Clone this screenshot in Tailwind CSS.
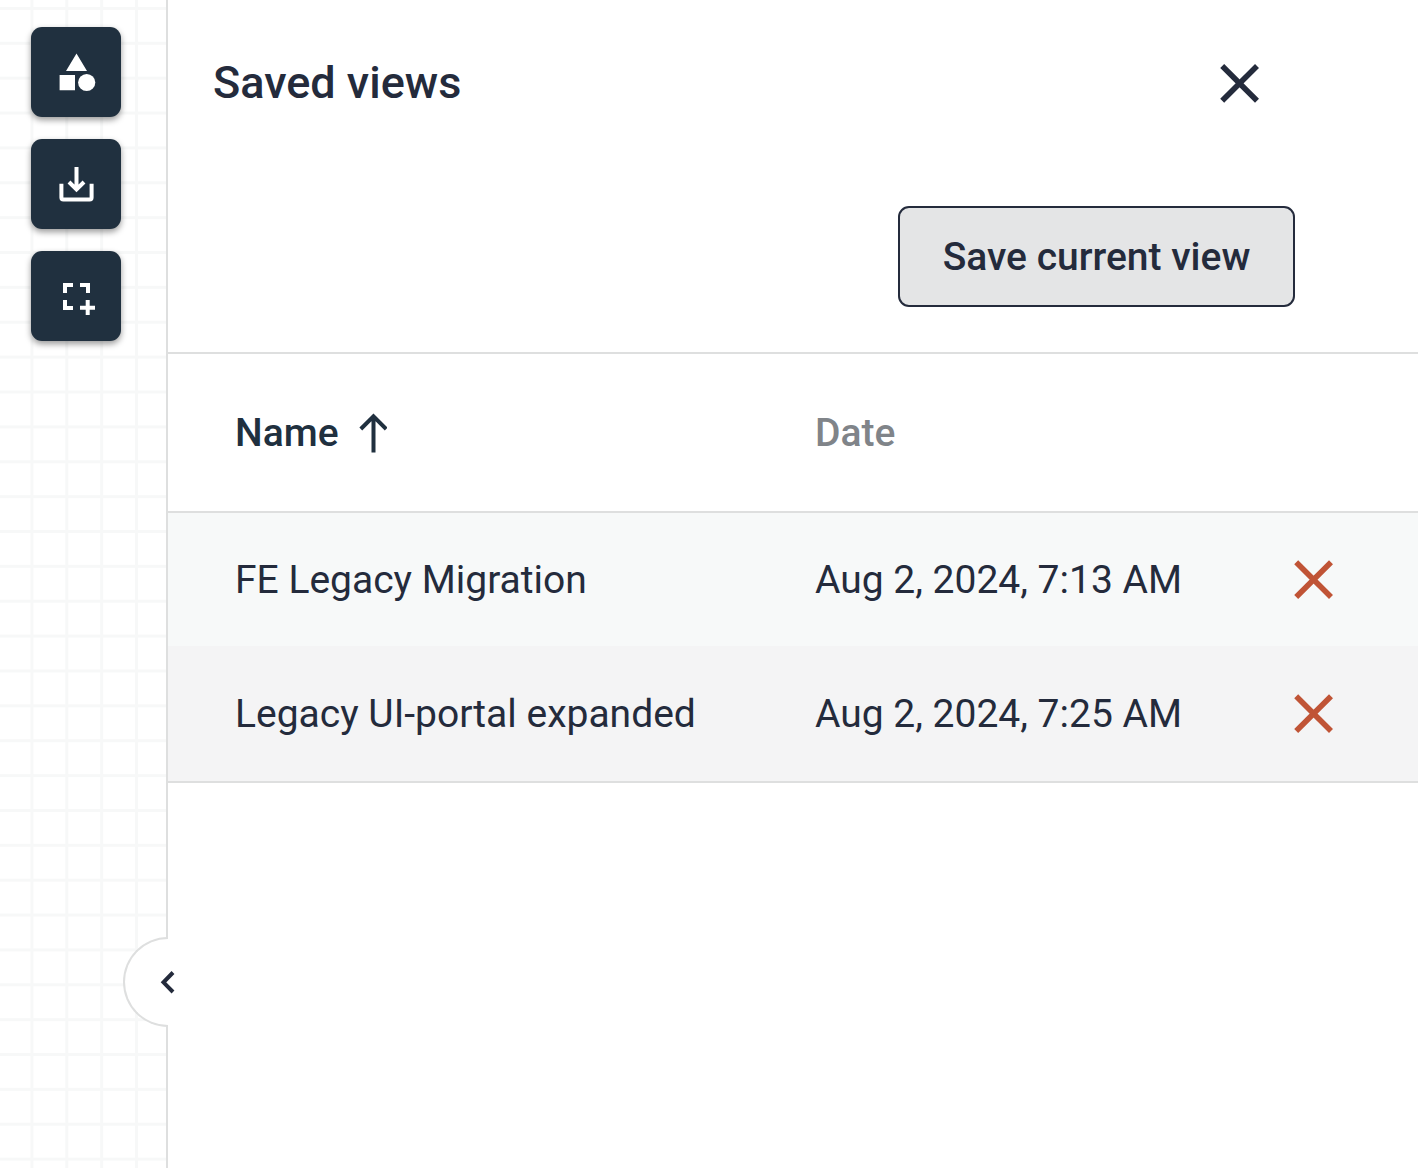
<!DOCTYPE html>
<html lang="en">
<head>
<meta charset="utf-8">
<meta name="viewport" content="width=device-width, initial-scale=1">
<title>Saved views</title>
<script src="https://cdn.jsdelivr.net/npm/@tailwindcss/browser@4"></script>
</head>
<body class="flex min-h-screen bg-white font-[Roboto,sans-serif] text-[#242b3c]">
  <!-- Canvas with grid and tools -->
  <aside class="relative w-[168px] shrink-0 border-r-2 border-[#dedfdf]">
    <svg class="absolute inset-0 size-full" aria-hidden="true">
      <defs>
        <pattern id="grid" x="14.5" y="-9" width="34.87" height="34.87" patternUnits="userSpaceOnUse">
          <path d="M17.4 0V34.87M0 17.4H34.87" stroke="#f7f8f8" stroke-width="3" fill="none"/>
        </pattern>
      </defs>
      <rect width="100%" height="100%" fill="url(#grid)"/>
    </svg>
    <nav class="relative flex flex-col items-start gap-[22px] pt-[27px] pl-[31px]" aria-label="Canvas tools">
      <button type="button" aria-label="Shapes" class="size-[90px] rounded-[11px] bg-[#20303f] text-white shadow-[0_3px_6px_rgba(0,0,0,0.4)]">
        <svg class="block size-full" viewBox="0 0 90 90" fill="currentColor"><path d="M45.5 26.5 56 44H35zM28.6 48H44V63.3H28.6z"/><circle cx="55.7" cy="55.5" r="8.6"/></svg>
      </button>
      <button type="button" aria-label="Download" class="size-[90px] rounded-[11px] bg-[#20303f] text-white shadow-[0_3px_6px_rgba(0,0,0,0.4)]">
        <svg class="block size-full" viewBox="0 0 90 90" fill="none" stroke="currentColor" stroke-width="4"><path d="M45.5 28V50M38 43 45.5 50.5 53 43M30.4 44.7V58.5Q30.4 60.5 32.4 60.5H58.6Q60.6 60.5 60.6 58.5V44.7"/></svg>
      </button>
      <button type="button" aria-label="Add selection" class="size-[90px] rounded-[11px] bg-[#20303f] text-white shadow-[0_3px_6px_rgba(0,0,0,0.4)]">
        <svg class="block size-full" viewBox="0 0 90 90" fill="none" stroke="currentColor" stroke-width="4"><path d="M42 34H34V42M49 34H57V42M34 49V57H42M49 56.8H64M56.7 49V64"/></svg>
      </button>
    </nav>
    <button type="button" aria-label="Collapse panel" class="absolute top-[937px] left-[123px] h-[90px] w-[45px] rounded-l-full border-2 border-r-0 border-[#dedfdf] bg-white">
      <svg class="absolute top-[31px] left-[31px] size-6" viewBox="0 0 24 24" fill="none" stroke="currentColor" stroke-width="4"><path d="M17 2.5 7.5 12.3 17 22"/></svg>
    </button>
  </aside>

  <main class="min-w-0 flex-1">
    <header class="border-b-2 border-[#dedfdf] pt-[49px] pb-[45px] pl-[45px]">
      <div class="flex items-center justify-between pr-[144px]">
        <h1 class="text-[45px] leading-[66px] font-medium">Saved views</h1>
        <button type="button" aria-label="Close" class="size-[68px]">
          <svg class="block size-full" viewBox="0 0 68 68" fill="none" stroke="currentColor" stroke-width="5.6"><path d="M16.2 17 51 51.8M51 17 16.2 51.8"/></svg>
        </button>
      </div>
      <div class="mt-[89px] flex justify-end pr-[123px]">
        <button type="button" class="min-w-[397px] rounded-[11px] border-2 border-[#242b3c] bg-[#e4e5e6] px-[42px] pt-6 pb-[22px] text-[39px] leading-[51px] font-medium">Save current view</button>
      </div>
    </header>

    <table class="w-full table-fixed border-collapse text-left text-[39px] leading-[46px]">
      <colgroup><col><col class="w-[445px]"><col class="w-[158px]"></colgroup>
      <thead>
        <tr class="h-[158px] border-b-2 border-[#dedfdf]">
          <th scope="col" aria-sort="ascending" class="pl-[67px] font-medium text-[#20303f]">
            <button type="button" class="flex items-center gap-5">Name
              <svg class="h-10 w-7" viewBox="0 0 28 40" fill="none" stroke="currentColor" stroke-width="4"><path d="M14.5 39.5V3M1.8 16 14.5 3.3 27.2 16"/></svg>
            </button>
          </th>
          <th scope="col" class="font-medium text-[#808489]"><button type="button">Date</button></th>
          <th scope="col" aria-label="Remove"></th>
        </tr>
      </thead>
      <tbody>
        <tr class="h-[134px] bg-[#f7f9f9]">
          <td class="pl-[67px]">FE Legacy Migration</td>
          <td>Aug 2, 2024, 7:13 AM</td>
          <td class="pl-5">
            <button type="button" aria-label="Remove FE Legacy Migration" class="block size-[68px] text-[#c05436]"><svg class="block size-full" viewBox="0 0 68 68" fill="none" stroke="currentColor" stroke-width="5.6"><path d="M16.2 16.2 51 51M51 16.2 16.2 51"/></svg></button>
          </td>
        </tr>
        <tr class="h-[136px] border-b-2 border-[#dedfdf] bg-[#f4f4f5]">
          <td class="pl-[67px]">Legacy UI-portal expanded</td>
          <td>Aug 2, 2024, 7:25 AM</td>
          <td class="pl-5">
            <button type="button" aria-label="Remove Legacy UI-portal expanded" class="block size-[68px] text-[#c05436]"><svg class="block size-full" viewBox="0 0 68 68" fill="none" stroke="currentColor" stroke-width="5.6"><path d="M16.2 16.2 51 51M51 16.2 16.2 51"/></svg></button>
          </td>
        </tr>
      </tbody>
    </table>
  </main>
</body>
</html>
